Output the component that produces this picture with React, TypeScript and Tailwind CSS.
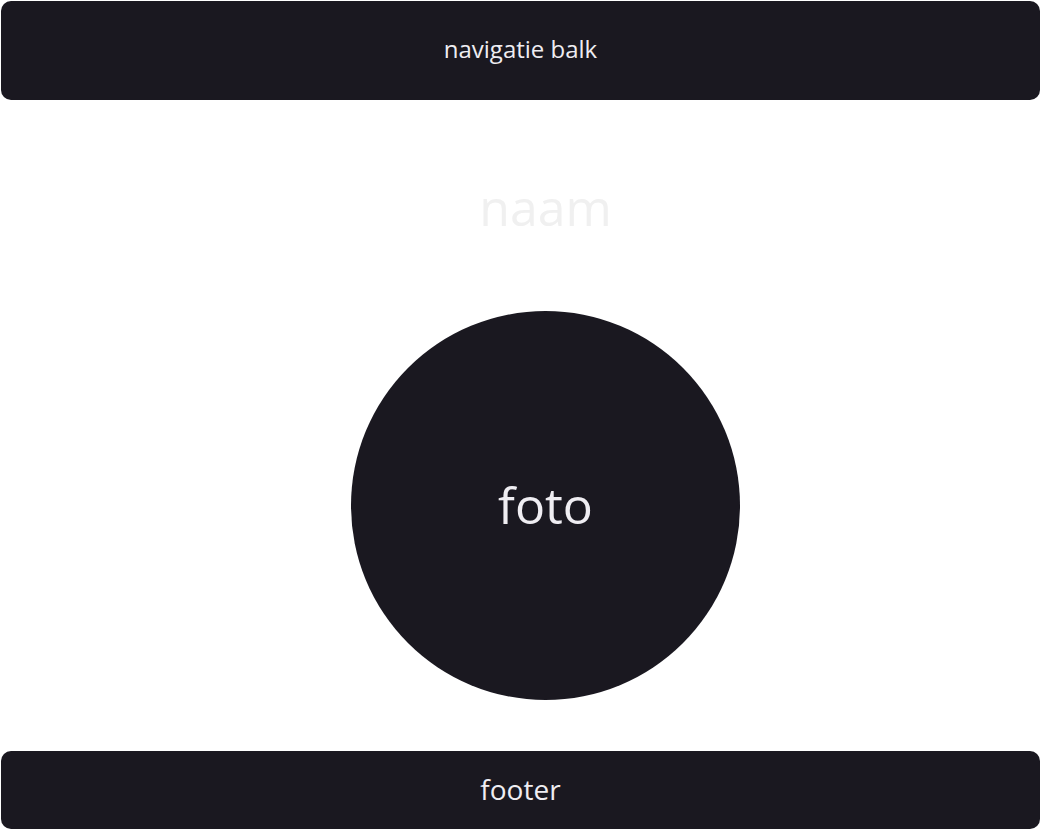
import React from 'react';

const font = { fontFamily: '"Open Sans", "Noto Sans", sans-serif' };

const App = () => {
  return (
    <div className="min-h-screen bg-white p-px flex flex-col" style={font}>
      {/* Nav */}
      <nav className="h-[99px] pb-1 rounded-[10px] bg-[#1a1820] flex items-center justify-center">
        <span className="text-[24px] text-[#efedf2]">navigatie balk</span>
      </nav>

      {/* Main */}
      <main className="pt-[71px] pl-[50px] flex flex-col items-center">
        <h1 className="h-[72px] leading-[72px] text-[50px] text-[#f0f0f0] font-normal">naam</h1>
        <div className="mt-[68px] w-[389px] h-[389px] rounded-full bg-[#1a1820] flex items-center justify-center">
          <span className="text-[50px] text-[#efedf2]">foto</span>
        </div>
      </main>

      {/* Footer */}
      <footer className="mt-[51px] h-[78px] rounded-[10px] bg-[#1a1820] flex items-center justify-center">
        <span className="text-[28px] leading-none pb-[3px] text-[#efedf2]">footer</span>
      </footer>
    </div>
  );
};

export default App;
